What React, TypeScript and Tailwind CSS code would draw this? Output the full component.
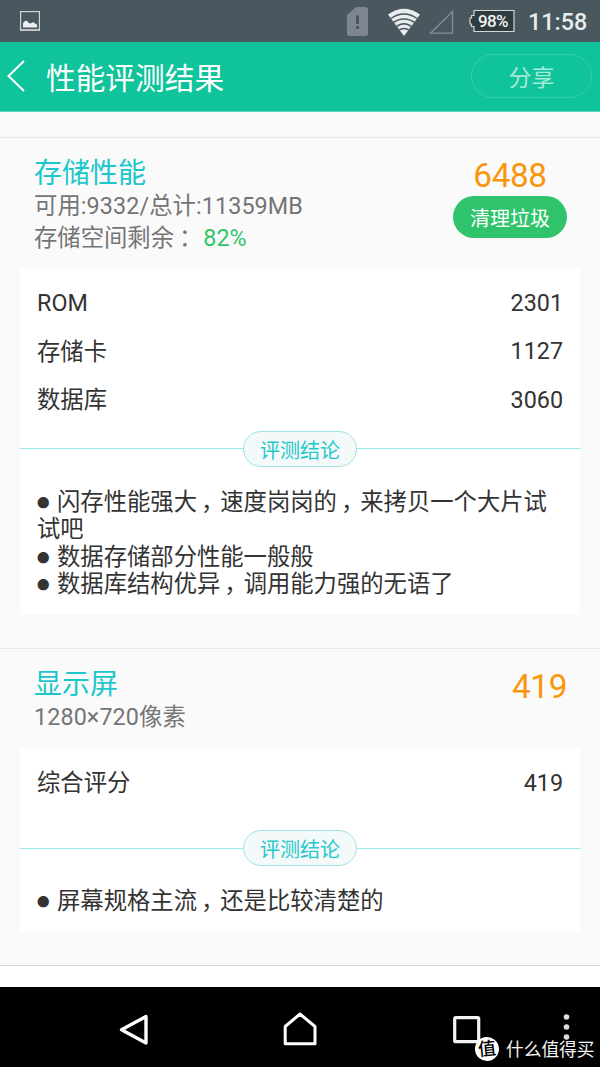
import type { ReactNode } from 'react';

type Row = { label: string; value: string };

// Fullwidth punctuation, centred in its cell
function Comma() {
  return <span className="inline-block w-[23.33px] whitespace-nowrap indent-[4px]">，</span>;
}

function StatusBar() {
  return (
    <div className="flex h-[41.5px] items-start bg-[#49575e]">
      <svg className="mt-[11px] ml-5" width="20" height="20" viewBox="0 0 20 20">
        <rect x="0.6" y="0.6" width="18.8" height="18.8" fill="none" stroke="#d0d4d6" strokeWidth="1.2" />
        <path d="M1 18.800h18" stroke="#b8bec0" strokeWidth="1.6" />
        <path d="M3 16.500v-4.500l2-2 1.500-.5 2.500 2.500 1.500.5 1.700-1 1.300-.3 1.500 1.300 2 1v3z" fill="#eceeef" />
      </svg>
      <svg className="mt-[7px] ml-[307px]" width="21" height="29" viewBox="0 0 21 29">
        <path d="M9 0h9.500a2.500 2.500 0 0 1 2.500 2.500v24a2.500 2.500 0 0 1-2.500 2.500h-16a2.500 2.500 0 0 1-2.500-2.500V8z" fill="#7d868e" />
        <path d="M9 8.500h3v8.500H9zM9 19h3v3H9z" fill="#49575e" />
      </svg>
      <svg className="mt-2 ml-5" width="32" height="28" viewBox="0 0 32 28">
        <clipPath id="wifi">
          <path d="M0 6.500Q16-5 32 6.500L16 28z" />
        </clipPath>
        <g clipPath="url(#wifi)">
          <path d="M0 0h32v28H0z" fill="#e9ecee" />
          <g fill="none" stroke="#49575e" strokeWidth="1.3">
            <path d="M2 11Q16 1 30 11" />
            <path d="M4 15.500Q16 6.500 28 15.500" />
            <path d="M7 19.500Q16 12 25 19.500" />
            <path d="M9 23.500Q16 17.500 23 23.500" />
          </g>
        </g>
      </svg>
      <svg className="mt-2.5 ml-[9px]" width="25" height="24" viewBox="0 0 25 24">
        <path d="M23.500 1.500v21.700H1.500z" fill="none" stroke="#849097" strokeWidth="1.300" />
      </svg>
      <div className="relative mt-[9px] ml-[15px] h-6 w-[46px]">
        <svg width="46" height="24" viewBox="0 0 46 24">
          <path d="M5 1.500h40v21H5v-5H2.500v-2.500H1V9h1.500V6.500H5z" fill="#2f3b3d" stroke="#d3d8da" strokeWidth="1.2" />
        </svg>
        <span className="absolute top-0 left-[9px] font-['Roboto'] text-[17px] leading-[24px] font-medium tracking-[-0.6px] text-[#f2f4f4]">
          98%
        </span>
      </div>
      <span className="mt-[7px] ml-[13px] font-['Roboto'] text-[23.33px] leading-[30px] font-medium whitespace-nowrap text-[#e9eced]">
        11:58
      </span>
    </div>
  );
}

function Header() {
  return (
    <header className="flex h-[70px] items-center border-b border-[#5ad7b8] bg-[#0fc49b] pr-2 pl-[7px]">
      <svg width="18" height="32" viewBox="0 0 18 32">
        <path d="M17 1L1.500 16 17 31" fill="none" stroke="#ffffff" strokeWidth="2" />
      </svg>
      <h1 className="ml-[21px] pt-[6px] text-[29.7px] leading-[64px] text-white">性能评测结果</h1>
      <button className="ml-auto h-11 w-[121px] rounded-full border border-[#35cba9] pt-[5px] text-[23px] leading-[38px] text-[#a6e9d8]">
        分享
      </button>
    </header>
  );
}

function SectionTitle({ children }: { children: ReactNode }) {
  return <h2 className="pt-[3px] text-[28px] leading-[33px] text-[#1cc7cc]">{children}</h2>;
}

function Conclusion() {
  return (
    <div className="flex h-9 items-center">
      <div className="h-px flex-1 bg-[#9be7e7]" />
      <div className="h-9 w-[114px] rounded-full border border-[#9fe2e2] bg-[#f4f9f9] pt-0.5 text-center text-[20px] leading-[35px] text-[#26c8cb]">
        评测结论
      </div>
      <div className="h-px flex-1 bg-[#9be7e7]" />
    </div>
  );
}

function Rows({ rows }: { rows: Row[] }) {
  return (
    <>
      {rows.map((row) => (
        <div key={row.label} className="flex h-[48.5px] items-center justify-between px-[17px] text-[23.33px]">
          <span className="pt-[3px]">{row.label}</span>
          <span className="pt-0.5">{row.value}</span>
        </div>
      ))}
    </>
  );
}

function Comment({ children }: { children: ReactNode }) {
  return (
    <li>
      <span className="inline-block w-5 align-[2px] text-[12.5px] leading-none">●</span>
      {children}
    </li>
  );
}

function NavBar() {
  return (
    <nav className="relative flex h-20 bg-black">
      <svg className="mt-[26px] ml-[118px]" width="31" height="33" viewBox="0 0 31 33">
        <path d="M28 3.500v26.500L3.500 16.700z" fill="none" stroke="#fff" strokeWidth="3.4" strokeLinejoin="round" />
      </svg>
      <svg className="mt-6 ml-[134px]" width="34" height="36" viewBox="0 0 34 36">
        <path d="M2.200 32.800v-17.300L17 3l15 12.500v17.300z" fill="none" stroke="#fff" strokeWidth="3" strokeLinejoin="round" />
      </svg>
      <svg className="mt-[29px] ml-[136px]" width="28" height="28" viewBox="0 0 28 28">
        <rect x="1.700" y="1.700" width="24" height="24" rx="1" fill="none" stroke="#f4f4f4" strokeWidth="3.200" />
      </svg>
      <svg className="mt-[26px] ml-[82px]" width="8" height="30" viewBox="0 0 8 30">
        <g fill="#dedede">
          <circle cx="3.500" cy="4" r="2.800" />
          <circle cx="3.500" cy="14" r="2.800" />
          <circle cx="3.500" cy="24" r="2.800" />
        </g>
      </svg>
      <div className="absolute top-[50px] left-[475px] flex h-6 items-center">
        <span className="h-6 w-6 -rotate-6 rounded-full bg-white text-center text-[18px] leading-[24px] font-medium text-black">
          值
        </span>
        <span className="ml-[7px] pt-0.5 text-[17.700px] leading-6 whitespace-nowrap text-[#f4f4f4]">什么值得买</span>
      </div>
    </nav>
  );
}

export default function App() {
  return (
    <div className="flex h-[1067px] w-[600px] flex-col overflow-hidden bg-white font-['Roboto','Noto_Sans_CJK_SC',sans-serif] text-[#333333]" lang="zh-CN">
      <StatusBar />
      <Header />

      <main className="h-[875.5px] shrink-0">
        <div className="h-[25px] bg-[#fafafa]" />

        <section className="h-[511px] border-t border-[#e8e8e8] bg-[#fafafa] px-5">
          <div className="flex h-[131.5px] justify-between pt-[16px] pr-[13px] pl-3.5">
            <div>
              <SectionTitle>存储性能</SectionTitle>
              <p className="text-[23.33px] leading-8 tracking-[0.1px] text-[#757575]">可用:9332/总计:11359MB</p>
              <p className="text-[23.33px] leading-8 text-[#757575]">
                存储空间剩余
                <span className="inline-block w-[23.33px] indent-[5px]">：</span>
                <span className="ml-1.5 text-[#2ec768]">82%</span>
              </p>
            </div>
            <div className="flex flex-col items-center">
              <span className="mt-0.5 text-[33.33px] leading-10 tracking-[-0.4px] text-[#f9960b]">6488</span>
              <button className="h-[42px] w-[114px] rounded-full bg-[#2fc46b] pt-0.5 text-[20px] leading-[42px] text-white">
                清理垃圾
              </button>
            </div>
          </div>

          <div className="h-[345px] bg-white pt-[9px]">
            <Rows
              rows={[
                { label: 'ROM', value: '2301' },
                { label: '存储卡', value: '1127' },
                { label: '数据库', value: '3060' },
              ]}
            />
            <div className="h-[7px]" />
            <Conclusion />
            <ul className="mt-[22px] pr-4 pl-[17px] text-[23.33px] leading-[27.5px]">
              <Comment>
                闪存性能强大
                <Comma />
                速度岗岗的
                <Comma />
                来拷贝一个大片试试吧
              </Comment>
              <Comment>数据存储部分性能一般般</Comment>
              <Comment>
                数据库结构优异
                <Comma />
                调用能力强的无语了
              </Comment>
            </ul>
          </div>
        </section>

        <section className="h-[318px] border-y border-t-[#e8e8e8] border-b-[#d9d9d9] bg-[#fafafa] px-5">
          <div className="flex h-[100.5px] justify-between pt-[16px] pr-[13px] pl-3.5">
            <div>
              <SectionTitle>显示屏</SectionTitle>
              <p className="text-[23.33px] leading-8 tracking-[0.1px] text-[#757575]">1280×720像素</p>
            </div>
            <span className="mt-0.5 text-[33.33px] leading-10 tracking-[-0.4px] text-[#f9960b]">419</span>
          </div>

          <div className="h-[182px] bg-white pt-[9px]">
            <Rows rows={[{ label: '综合评分', value: '419' }]} />
            <div className="h-[23.5px]" />
            <Conclusion />
            <ul className="mt-[21.5px] pr-4 pl-[17px] text-[23.33px] leading-[27.5px]">
              <Comment>
                屏幕规格主流
                <Comma />
                还是比较清楚的
              </Comment>
            </ul>
          </div>
        </section>
      </main>

      <NavBar />
    </div>
  );
}
